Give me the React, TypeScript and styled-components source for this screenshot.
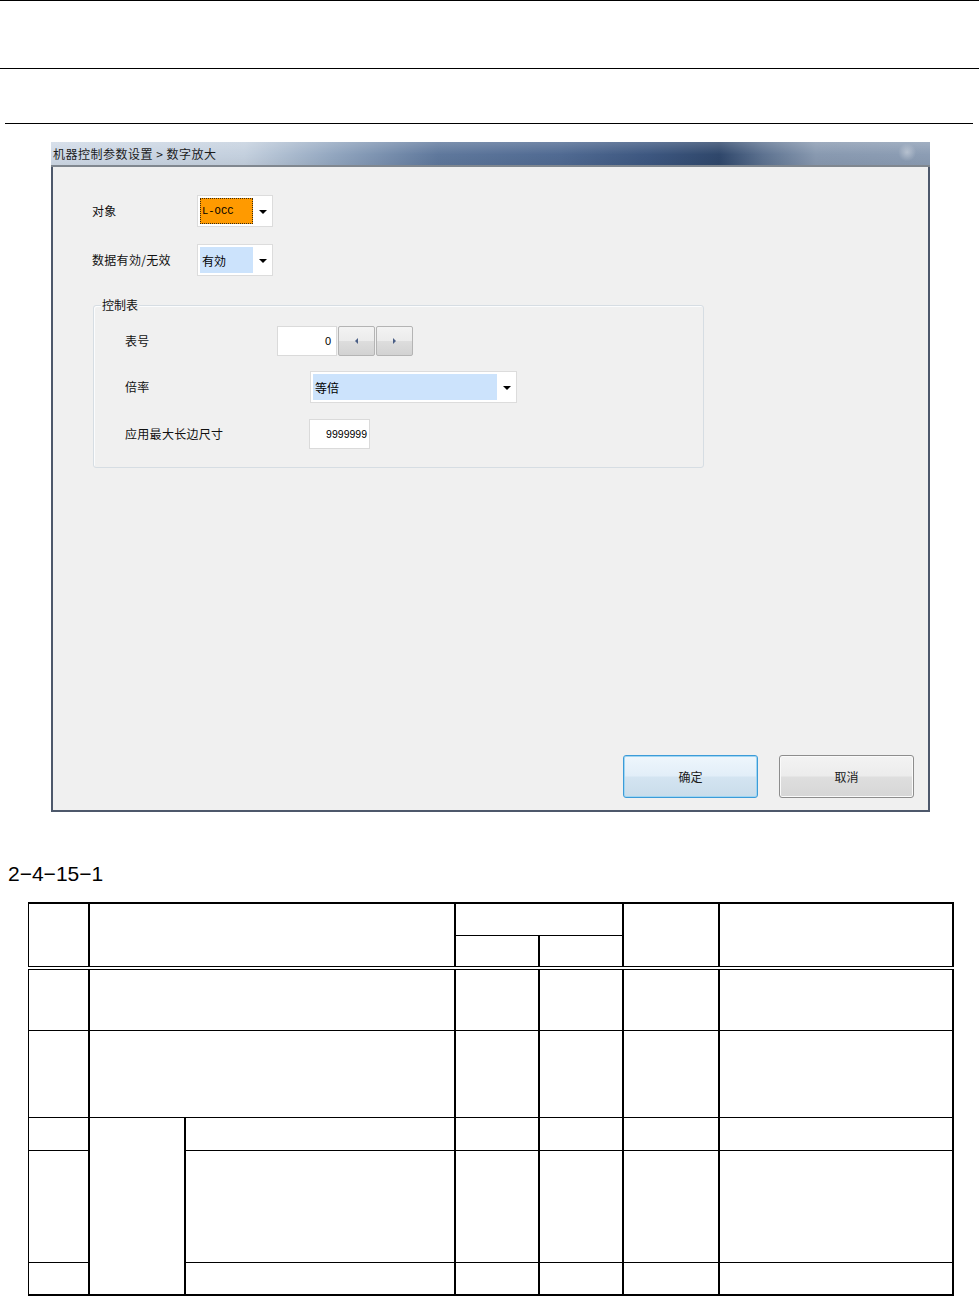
import React from "react";
import styled, { createGlobalStyle } from "styled-components";

const GlobalStyle = createGlobalStyle`
  html, body {
    margin: 0;
    padding: 0;
    background: #fff;
  }
  body {
    font-family: "Noto Sans CJK SC", "Liberation Sans", sans-serif;
    color: #000;
  }
`;

const Page = styled.div`
  width: 979px;
  display: flex;
  flex-direction: column;
`;

const Rule = styled.div<{ $top: number; $left?: number; $right?: number }>`
  margin-top: ${({ $top }) => $top}px;
  margin-left: ${({ $left }) => $left ?? 0}px;
  margin-right: ${({ $right }) => $right ?? 0}px;
  border-top: 1px solid #000;
`;

/* ---------- dialog window ---------- */

const Window = styled.div`
  margin: 18px 0 0 51px;
  width: 879px;
  display: flex;
  flex-direction: column;
`;

const TitleBar = styled.div`
  height: 23px;
  display: flex;
  align-items: center;
  padding-left: 2px;
  font-size: 12px;
  letter-spacing: 0.5px;
  white-space: pre;
  color: #1c1c1c;
  border-bottom: 2px solid #80878f;
  background:
    radial-gradient(circle at 97.4% 45%, rgba(255, 255, 255, 0.35) 0, rgba(255, 255, 255, 0) 9px),
    linear-gradient(to bottom, rgba(255, 255, 255, 0.18), rgba(255, 255, 255, 0) 55%, rgba(0, 0, 0, 0.04)),
    linear-gradient(
      to right,
      #cfd9e6 0%,
      #c4d0de 22%,
      #93a7c0 32%,
      #5f789c 44%,
      #506a92 58%,
      #3d5780 68%,
      #2f476b 76%,
      #5d7290 81%,
      #8899b0 87%,
      #8c9db4 100%
    );
`;

const Client = styled.div`
  height: 645px;
  box-sizing: border-box;
  background: #f0f0f0;
  border: 2px solid #4d586b;
  border-top: none;
  display: flex;
  flex-direction: column;
  padding: 28px 14px 12px 39px;
`;

const FieldRow = styled.div<{ $gap?: number; $h?: number }>`
  display: flex;
  align-items: center;
  height: ${({ $h }) => $h ?? 32}px;
  margin-top: ${({ $gap }) => $gap ?? 0}px;
`;

const FieldLabel = styled.span<{ $w: number }>`
  width: ${({ $w }) => $w}px;
  flex-shrink: 0;
  font-size: 12px;
  line-height: 16px;
  letter-spacing: 0.3px;
  color: #111;
`;

const Combo = styled.div<{ $w: number }>`
  width: ${({ $w }) => $w}px;
  height: 32px;
  box-sizing: border-box;
  background: #fff;
  border: 1px solid #dcdcdc;
  padding: 2px 0 2px 2px;
  display: flex;
  align-items: stretch;
`;

const ComboValue = styled.div<{ $tone: "focus" | "select"; $mono?: boolean }>`
  flex: 1;
  display: flex;
  align-items: center;
  padding-left: 2px;
  background: ${({ $tone }) => ($tone === "focus" ? "#ff9a00" : "#cce3fc")};
  outline: ${({ $tone }) => ($tone === "focus" ? "1px dotted #3a2a10" : "none")};
  outline-offset: -1px;
  font-family: ${({ $mono }) =>
    $mono ? '"Liberation Mono", monospace' : '"Noto Sans CJK SC", sans-serif'};
  font-size: ${({ $mono }) => ($mono ? "10.5px" : "12px")};
  color: #000;
`;

const ComboArrow = styled.div`
  width: 19px;
  flex-shrink: 0;
  display: flex;
  align-items: center;
  justify-content: center;

  &::after {
    content: "";
    border-left: 4px solid transparent;
    border-right: 4px solid transparent;
    border-top: 4px solid #000;
    margin-top: 1px;
  }
`;

const GroupBox = styled.div`
  position: relative;
  margin: 29px 0 0 1px;
  width: 611px;
  height: 163px;
  box-sizing: border-box;
  border: 1px solid #d6dde3;
  border-radius: 3px;
  box-shadow: inset 1px 1px 0 #fbfcfd;
  padding: 20px 0 0 31px;
  display: flex;
  flex-direction: column;
`;

const GroupCaption = styled.span`
  position: absolute;
  top: -9px;
  left: 7px;
  padding: 0 1px;
  background: #f0f0f0;
  font-size: 12px;
  line-height: 16px;
  color: #111;
`;

const TextBox = styled.div<{ $w: number; $small?: boolean }>`
  width: ${({ $w }) => $w}px;
  height: 30px;
  box-sizing: border-box;
  background: #fff;
  border: 1px solid #dadada;
  display: flex;
  align-items: center;
  justify-content: flex-end;
  padding-right: ${({ $small }) => ($small ? 2 : 5)}px;
  font-family: "Liberation Sans", sans-serif;
  font-size: ${({ $small }) => ($small ? 10.5 : 11)}px;
  color: #000;
`;

const StepButton = styled.div<{ $dir: "left" | "right" }>`
  width: 37px;
  height: 30px;
  margin-left: 1px;
  box-sizing: border-box;
  border: 1px solid #b4b4b4;
  border-radius: 2px;
  background: linear-gradient(to bottom, #f3f3f3 0%, #ebebeb 50%, #dddddd 51%, #d2d2d2 100%);
  display: flex;
  align-items: center;
  justify-content: center;

  &::after {
    content: "";
    border-top: 3px solid transparent;
    border-bottom: 3px solid transparent;
    ${({ $dir }) =>
      $dir === "left"
        ? "border-right: 3px solid #4a5f86;"
        : "border-left: 3px solid #4a5f86;"}
  }
`;

const ButtonBar = styled.div`
  margin-top: auto;
  display: flex;
  justify-content: flex-end;
  gap: 21px;
`;

const DialogButton = styled.div<{ $primary?: boolean }>`
  width: 135px;
  height: 43px;
  box-sizing: border-box;
  border-radius: 3px;
  border: 1px solid ${({ $primary }) => ($primary ? "#3c9bd8" : "#8d8d8d")};
  box-shadow: ${({ $primary }) =>
    $primary ? "inset 0 0 0 1px #9fd5f2" : "inset 0 0 0 1px #fafafa"};
  background: ${({ $primary }) =>
    $primary
      ? "linear-gradient(to bottom, #eef6fc 0%, #e2eef8 48%, #d3e4f1 52%, #c9dcea 100%)"
      : "linear-gradient(to bottom, #f3f3f3 0%, #ececec 48%, #dedede 52%, #d6d6d6 100%)"};
  display: flex;
  align-items: center;
  justify-content: center;
  font-size: 12px;
  color: #1a1a1a;
`;

/* ---------- figure caption + table ---------- */

const Caption = styled.div`
  margin: 50px 0 0 8px;
  font-family: "Liberation Sans", sans-serif;
  font-size: 21px;
  line-height: 24px;
  color: #000;
`;

const Grid = styled.table`
  margin: 16px 0 0 28px;
  width: 924px;
  table-layout: fixed;
  border-collapse: collapse;
  border-top: 2px solid #000;
  border-bottom: 2px solid #000;
  border-left: 1px solid #000;
  border-right: 2px solid #000;
`;

const Col = styled.col<{ $w: number }>`
  width: ${({ $w }) => $w}px;
`;

const Row = styled.tr<{ $h: number }>`
  height: ${({ $h }) => $h}px;
`;

const Cell = styled.td<{ $first?: boolean; $double?: boolean; $thin?: boolean }>`
  padding: 0;
  border-top: ${({ $double }) => ($double ? "4px double #000" : "1px solid #000")};
  border-bottom: 1px solid #000;
  border-left: ${({ $first, $thin }) => ($first || $thin ? 1 : 2)}px solid #000;
  border-right: 2px solid #000;
`;

const colWidths = [60, 96, 270, 84, 84, 96, 234];

const App: React.FC = () => {
  return (
    <Page>
      <GlobalStyle />
      <Rule $top={0} />
      <Rule $top={67} />
      <Rule $top={54} $left={5} $right={6} />

      <Window>
        <TitleBar>机器控制参数设置 &gt; 数字放大</TitleBar>
        <Client>
          <FieldRow>
            <FieldLabel $w={105}>对象</FieldLabel>
            <Combo $w={76}>
              <ComboValue $tone="focus" $mono>
                L-OCC
              </ComboValue>
              <ComboArrow />
            </Combo>
          </FieldRow>
          <FieldRow $gap={17}>
            <FieldLabel $w={105}>数据有効/无效</FieldLabel>
            <Combo $w={76}>
              <ComboValue $tone="select">有効</ComboValue>
              <ComboArrow />
            </Combo>
          </FieldRow>

          <GroupBox>
            <GroupCaption>控制表</GroupCaption>
            <FieldRow $h={30}>
              <FieldLabel $w={152}>表号</FieldLabel>
              <TextBox $w={60}>0</TextBox>
              <StepButton $dir="left" />
              <StepButton $dir="right" />
            </FieldRow>
            <FieldRow $gap={15}>
              <FieldLabel $w={185}>倍率</FieldLabel>
              <Combo $w={207}>
                <ComboValue $tone="select">等倍</ComboValue>
                <ComboArrow />
              </Combo>
            </FieldRow>
            <FieldRow $gap={16} $h={30}>
              <FieldLabel $w={184}>应用最大长边尺寸</FieldLabel>
              <TextBox $w={61} $small>
                9999999
              </TextBox>
            </FieldRow>
          </GroupBox>

          <ButtonBar>
            <DialogButton $primary>确定</DialogButton>
            <DialogButton>取消</DialogButton>
          </ButtonBar>
        </Client>
      </Window>

      <Caption>2−4−15−1</Caption>

      <Grid>
        <colgroup>
          {colWidths.map((w, i) => (
            <Col key={i} $w={w} />
          ))}
        </colgroup>
        <thead>
          <Row $h={32}>
            <Cell as="th" $first rowSpan={2} />
            <Cell as="th" colSpan={2} rowSpan={2} />
            <Cell as="th" colSpan={2} />
            <Cell as="th" rowSpan={2} />
            <Cell as="th" rowSpan={2} />
          </Row>
          <Row $h={33}>
            <Cell as="th" />
            <Cell as="th" $thin />
          </Row>
        </thead>
        <tbody>
          <Row $h={62}>
            <Cell $first $double />
            <Cell $double colSpan={2} />
            <Cell $double />
            <Cell $double />
            <Cell $double />
            <Cell $double />
          </Row>
          <Row $h={87}>
            <Cell $first />
            <Cell colSpan={2} />
            <Cell />
            <Cell />
            <Cell />
            <Cell />
          </Row>
          <Row $h={33}>
            <Cell $first />
            <Cell rowSpan={3} />
            <Cell />
            <Cell />
            <Cell />
            <Cell />
            <Cell />
          </Row>
          <Row $h={112}>
            <Cell $first />
            <Cell />
            <Cell />
            <Cell />
            <Cell />
            <Cell />
          </Row>
          <Row $h={33}>
            <Cell $first />
            <Cell />
            <Cell />
            <Cell />
            <Cell />
            <Cell />
          </Row>
        </tbody>
      </Grid>
    </Page>
  );
};

export default App;
